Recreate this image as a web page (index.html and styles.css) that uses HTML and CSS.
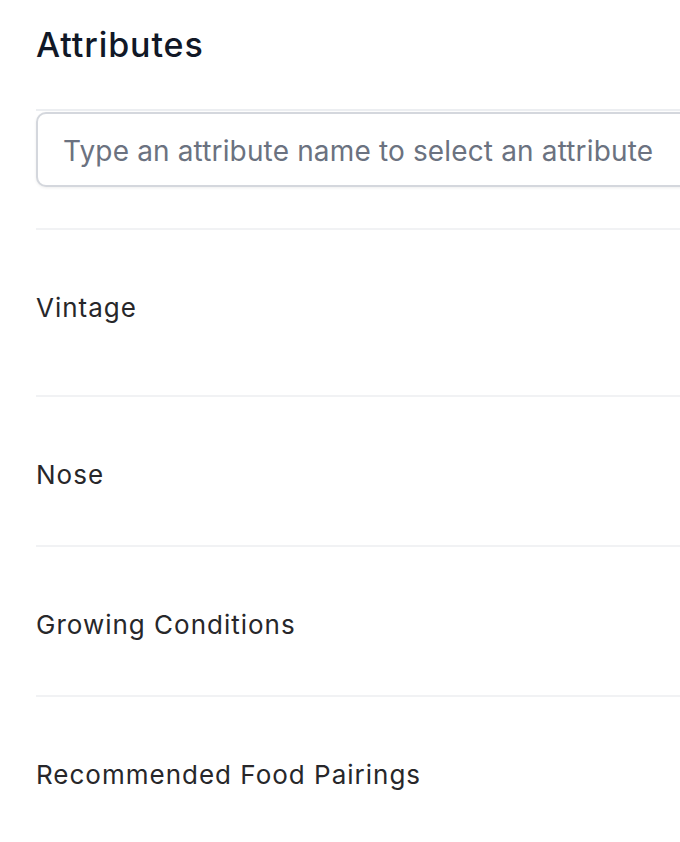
FILE: index.html
```html
<!DOCTYPE html>
<html lang="en">
<head>
<meta charset="utf-8">
<title>Attributes</title>
<link rel="stylesheet" href="styles.css">
</head>
<body>
<div class="panel">
  <h1 class="title">Attributes</h1>
  <div class="search-section">
    <input class="search" type="text" placeholder="Type an attribute name to select an attribute">
  </div>
  <ul class="attr-list">
    <li class="attr-row attr-row--first">Vintage</li>
    <li class="attr-row">Nose</li>
    <li class="attr-row">Growing Conditions</li>
    <li class="attr-row">Recommended Food Pairings</li>
  </ul>
</div>
</body>
</html>
```

FILE: styles.css
```css
html, body {
  margin: 0;
  padding: 0;
  background: #ffffff;
  overflow: hidden;
}

body {
  font-family: Inter, "Noto Sans", "Liberation Sans", sans-serif;
}

.panel {
  width: 760px;
  padding-left: 36px;
}

.title {
  margin: 25px 0 0 0;
  font-size: 34px;
  line-height: 40px;
  font-weight: 500;
  color: #111827;
  letter-spacing: 0.9px;
}

.search-section {
  margin-top: 44px;
  border-top: 2px solid #eceef1;
  padding-top: 1px;
  padding-bottom: 41px;
}

.search {
  display: block;
  box-sizing: border-box;
  width: 100%;
  height: 75px;
  margin: 0;
  padding: 2px 25px 0 25px;
  border: 2px solid #d4d7dd;
  border-radius: 10px;
  background: #ffffff;
  box-shadow: 0 1px 3px rgba(0, 0, 0, 0.07);
  font-family: Inter, "Noto Sans", "Liberation Sans", sans-serif;
  font-size: 28px;
  letter-spacing: 0.15px;
  color: #111827;
  outline: none;
}

.search::placeholder {
  color: #6b7280;
  opacity: 1;
}

.attr-list {
  list-style: none;
  margin: 0;
  padding: 0;
}

.attr-row {
  border-top: 2px solid #f1f2f4;
  padding: 62px 0 54px 0;
  font-size: 26px;
  line-height: 32px;
  letter-spacing: 1px;
  color: #27272a;
}

.attr-row--first {
  padding-bottom: 71px;
}
```
